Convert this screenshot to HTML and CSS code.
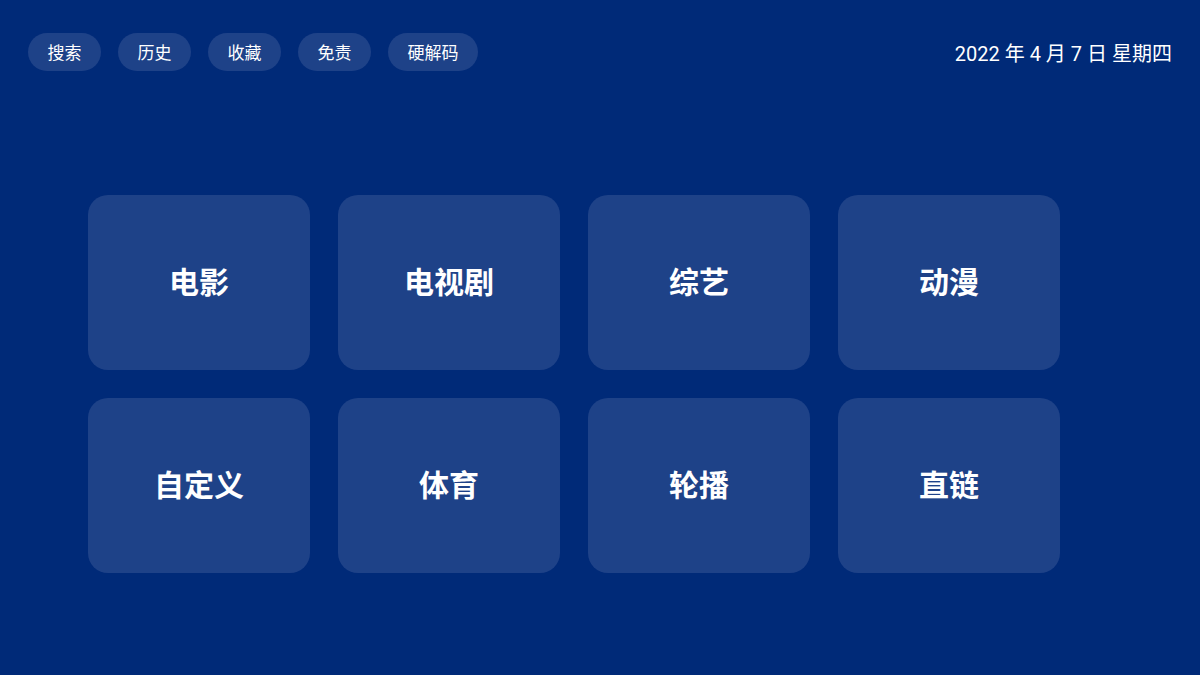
FILE: index.html
```html
<!DOCTYPE html>
<html lang="zh-CN">
<head>
<meta charset="utf-8">
<title>首页</title>
<link rel="stylesheet" href="styles.css">
</head>
<body>
<div class="page">
  <header class="topbar">
    <nav class="tabs">
      <span class="pill">搜索</span>
      <span class="pill">历史</span>
      <span class="pill">收藏</span>
      <span class="pill">免责</span>
      <span class="pill">硬解码</span>
    </nav>
    <div class="date">2022 年 4 月 7 日 星期四</div>
  </header>
  <main class="grid">
    <div class="card">电影</div>
    <div class="card">电视剧</div>
    <div class="card">综艺</div>
    <div class="card">动漫</div>
    <div class="card">自定义</div>
    <div class="card">体育</div>
    <div class="card">轮播</div>
    <div class="card">直链</div>
  </main>
</div>
</body>
</html>
```
FILE: styles.css
```css
html, body {
  margin: 0;
  padding: 0;
  background: #002a78;
  width: 1200px;
  height: 675px;
  overflow: hidden;
  font-family: "Roboto", "Noto Sans CJK SC", sans-serif;
  color: #ffffff;
}
.page {
  padding: 33px 28px 0 28px;
}
.topbar {
  display: flex;
  justify-content: space-between;
  align-items: center;
  height: 38px;
}
.tabs {
  display: flex;
  gap: 17px;
}
.pill {
  height: 38px;
  line-height: 38px;
  padding: 0 19.5px;
  border-radius: 19px;
  background: #1e4288;
  font-size: 17px;
  font-family: "Noto Sans CJK SC", sans-serif;
  white-space: nowrap;
}
.date {
  font-size: 20px;
  white-space: nowrap;
}
.grid {
  display: grid;
  grid-template-columns: repeat(4, 222px);
  grid-auto-rows: 175px;
  gap: 28px;
  margin: 124px 0 0 60px;
}
.card {
  background: #1e4288;
  border-radius: 20px;
  display: flex;
  align-items: center;
  justify-content: center;
  padding-bottom: 5px;
  box-sizing: border-box;
  font-family: "Noto Sans CJK SC", sans-serif;
  font-size: 30px;
  font-weight: 700;
}
```
